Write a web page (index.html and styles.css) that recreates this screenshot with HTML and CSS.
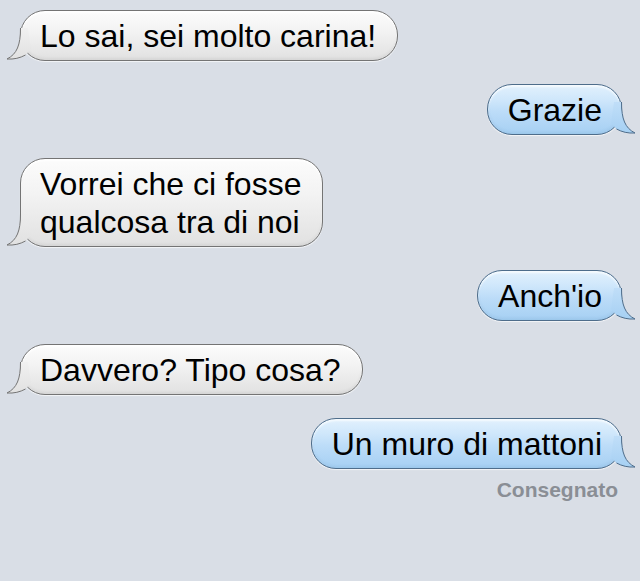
FILE: index.html
```html
<!DOCTYPE html>
<html lang="it">
<head>
<meta charset="utf-8">
<title>Messaggi</title>
<link rel="stylesheet" href="styles.css">
</head>
<body>
<main class="thread">
  <div class="row row-in">
    <div class="bubble bubble-in">Lo sai, sei molto carina!
      <svg class="tail" width="40" height="36" viewBox="0 0 40 36"><defs><linearGradient id="g1" x1="0" y1="0" x2="0" y2="1"><stop offset="0" stop-color="#f1f1f1"/><stop offset="1" stop-color="#e1e1e1"/></linearGradient></defs><path class="tail-fill" fill="url(#g1)" d="M14.5 3 C14.5 20 11 29 1 34 C8 34.5 14 33 19.5 30 L25 24 L22 3 Z"/><path class="tail-line" d="M14.5 3 C14.5 20 11 29 1 34 C8 34.5 14 33 19.5 30"/></svg>
    </div>
  </div>
  <div class="row row-out">
    <div class="bubble bubble-out">Grazie
      <svg class="tail" width="40" height="36" viewBox="0 0 40 36"><defs><linearGradient id="g2" x1="0" y1="0" x2="0" y2="1"><stop offset="0" stop-color="#c0def8"/><stop offset="1" stop-color="#a6d0f3"/></linearGradient></defs><path class="tail-fill" fill="url(#g2)" d="M14.5 3 C14.5 20 11 29 1 34 C8 34.5 14 33 19.5 30 L25 24 L22 3 Z"/><path class="tail-line" d="M14.5 3 C14.5 20 11 29 1 34 C8 34.5 14 33 19.5 30"/></svg>
    </div>
  </div>
  <div class="row row-in">
    <div class="bubble bubble-in">Vorrei che ci fosse<br>qualcosa tra di noi
      <svg class="tail" width="40" height="36" viewBox="0 0 40 36"><defs><linearGradient id="g3" x1="0" y1="0" x2="0" y2="1"><stop offset="0" stop-color="#ececec"/><stop offset="1" stop-color="#e1e1e1"/></linearGradient></defs><path class="tail-fill" fill="url(#g3)" d="M14.5 3 C14.5 20 11 29 1 34 C8 34.5 14 33 19.5 30 L25 24 L22 3 Z"/><path class="tail-line" d="M14.5 3 C14.5 20 11 29 1 34 C8 34.5 14 33 19.5 30"/></svg>
    </div>
  </div>
  <div class="row row-out">
    <div class="bubble bubble-out">Anch'io
      <svg class="tail" width="40" height="36" viewBox="0 0 40 36"><defs><linearGradient id="g4" x1="0" y1="0" x2="0" y2="1"><stop offset="0" stop-color="#c0def8"/><stop offset="1" stop-color="#a6d0f3"/></linearGradient></defs><path class="tail-fill" fill="url(#g4)" d="M14.5 3 C14.5 20 11 29 1 34 C8 34.5 14 33 19.5 30 L25 24 L22 3 Z"/><path class="tail-line" d="M14.5 3 C14.5 20 11 29 1 34 C8 34.5 14 33 19.5 30"/></svg>
    </div>
  </div>
  <div class="row row-in">
    <div class="bubble bubble-in">Davvero? Tipo cosa?
      <svg class="tail" width="40" height="36" viewBox="0 0 40 36"><defs><linearGradient id="g5" x1="0" y1="0" x2="0" y2="1"><stop offset="0" stop-color="#f1f1f1"/><stop offset="1" stop-color="#e1e1e1"/></linearGradient></defs><path class="tail-fill" fill="url(#g5)" d="M14.5 3 C14.5 20 11 29 1 34 C8 34.5 14 33 19.5 30 L25 24 L22 3 Z"/><path class="tail-line" d="M14.5 3 C14.5 20 11 29 1 34 C8 34.5 14 33 19.5 30"/></svg>
    </div>
  </div>
  <div class="row row-out">
    <div class="bubble bubble-out">Un muro di mattoni
      <svg class="tail" width="40" height="36" viewBox="0 0 40 36"><defs><linearGradient id="g6" x1="0" y1="0" x2="0" y2="1"><stop offset="0" stop-color="#c0def8"/><stop offset="1" stop-color="#a6d0f3"/></linearGradient></defs><path class="tail-fill" fill="url(#g6)" d="M14.5 3 C14.5 20 11 29 1 34 C8 34.5 14 33 19.5 30 L25 24 L22 3 Z"/><path class="tail-line" d="M14.5 3 C14.5 20 11 29 1 34 C8 34.5 14 33 19.5 30"/></svg>
    </div>
  </div>
  <div class="status">Consegnato</div>
</main>
</body>
</html>
```

FILE: styles.css
```css
html, body {
  margin: 0;
  padding: 0;
  background: #d9dee6;
}

body {
  font-family: "Liberation Sans", Arial, sans-serif;
  color: #000;
}

.thread {
  display: flex;
  flex-direction: column;
  gap: 23px;
  padding: 10px 18px 0 20px;
}

.row {
  display: flex;
}

.row-in {
  justify-content: flex-start;
}

.row-out {
  justify-content: flex-end;
}

.bubble {
  position: relative;
  font-size: 32px;
  line-height: 38px;
  padding: 6px 21px 5px 19px;
  border-radius: 25px;
  border: 1px solid #747474;
  white-space: nowrap;
}

.bubble-in {
  background: linear-gradient(to bottom, #fcfcfc 0%, #f3f3f3 40%, #e1e1e1 100%);
  box-shadow: inset 0 2px 2px rgba(255, 255, 255, 0.9), inset 0 -2px 3px rgba(0, 0, 0, 0.05), 0 1px 1px rgba(255, 255, 255, 0.7);
}

.bubble-out {
  padding: 6px 19px 5px 20px;
  border-color: #4e6d8b;
  background: linear-gradient(to bottom, #e2f1fd 0%, #cfe7fb 30%, #bcdcf8 55%, #a6d0f3 100%);
  box-shadow: inset 0 2px 2px rgba(255, 255, 255, 0.7), inset 0 -2px 3px rgba(40, 90, 140, 0.08), 0 1px 1px rgba(255, 255, 255, 0.7);
}

.tail {
  position: absolute;
  bottom: -1px;
  left: -15px;
  overflow: visible;
}

.bubble-out .tail {
  left: auto;
  right: -15px;
  transform: scaleX(-1);
}

.tail-line {
  fill: none;
  stroke: #747474;
  stroke-width: 1;
}

.bubble-out .tail-line {
  stroke: #4e6d8b;
}

.status {
  align-self: flex-end;
  margin-top: -14px;
  margin-right: 4px;
  font-size: 21px;
  font-weight: bold;
  line-height: 24px;
  color: #8a8e95;
}
```
